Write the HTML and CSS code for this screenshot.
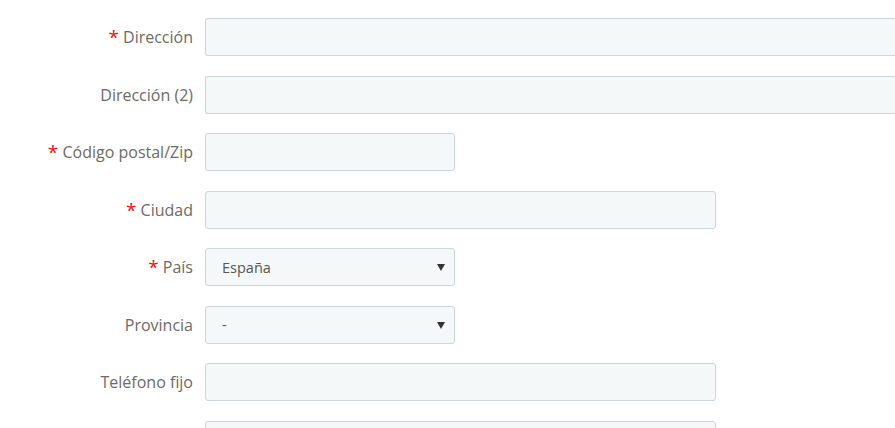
FILE: index.html
```html
<!DOCTYPE html>
<html lang="es">
<head>
<meta charset="utf-8">
<title>Dirección</title>
<link rel="stylesheet" href="styles.css">
</head>
<body>
<form class="form">
  <div class="row">
    <label class="label"><span class="req">*</span> Dirección</label>
    <input class="field field-long" type="text">
  </div>
  <div class="row">
    <label class="label">Dirección (2)</label>
    <input class="field field-long" type="text">
  </div>
  <div class="row">
    <label class="label"><span class="req">*</span> Código postal/Zip</label>
    <input class="field field-short" type="text">
  </div>
  <div class="row">
    <label class="label"><span class="req">*</span> Ciudad</label>
    <input class="field field-mid" type="text">
  </div>
  <div class="row">
    <label class="label"><span class="req">*</span> País</label>
    <span class="select-wrap field-short">
      <select class="field select"><option>España</option></select>
    </span>
  </div>
  <div class="row">
    <label class="label">Provincia</label>
    <span class="select-wrap field-short">
      <select class="field select"><option>-</option></select>
    </span>
  </div>
  <div class="row">
    <label class="label">Teléfono fijo</label>
    <input class="field field-mid" type="text">
  </div>
  <div class="row">
    <label class="label"></label>
    <input class="field field-mid" type="text">
  </div>
</form>
</body>
</html>
```

FILE: styles.css
```css
html, body {
  margin: 0;
  padding: 0;
  background: #ffffff;
  overflow: hidden;
}
body {
  width: 895px;
  height: 428px;
  font-family: "Open Sans", "Noto Sans", sans-serif;
}
.form {
  box-sizing: border-box;
  height: 428px;
  overflow: hidden;
  padding-top: 18px;
  display: flex;
  flex-direction: column;
  gap: 19.5px;
}
.row {
  flex: none;
  display: grid;
  grid-template-columns: 193px 1fr;
  column-gap: 12px;
  align-items: center;
  height: 38px;
}
.label {
  text-align: right;
  font-size: 16px;
  color: #6e6a66;
  white-space: nowrap;
}
.req {
  color: #ee1111;
  font-size: 19px;
  line-height: 1;
  vertical-align: -1px;
}
.field {
  box-sizing: border-box;
  height: 38px;
  background: #f5f8f9;
  border: 1px solid #c9d7da;
  border-radius: 3px;
  font-family: "Open Sans", "Noto Sans", sans-serif;
  font-size: 14.5px;
  color: #555555;
  outline: none;
  margin: 0;
}
.field-long {
  width: 100%;
  border-right: none;
  border-radius: 3px 0 0 3px;
}
.field-mid { width: 511px; }
.field-short { width: 250px; }
.select-wrap {
  position: relative;
  display: block;
  height: 38px;
}
.select {
  width: 100%;
  appearance: none;
  -webkit-appearance: none;
  padding: 0 30px 0 16px;
}
.select-wrap::after {
  content: "";
  position: absolute;
  right: 10px;
  top: 16px;
  border-left: 4px solid transparent;
  border-right: 4px solid transparent;
  border-top: 7px solid #333333;
  pointer-events: none;
}
```
